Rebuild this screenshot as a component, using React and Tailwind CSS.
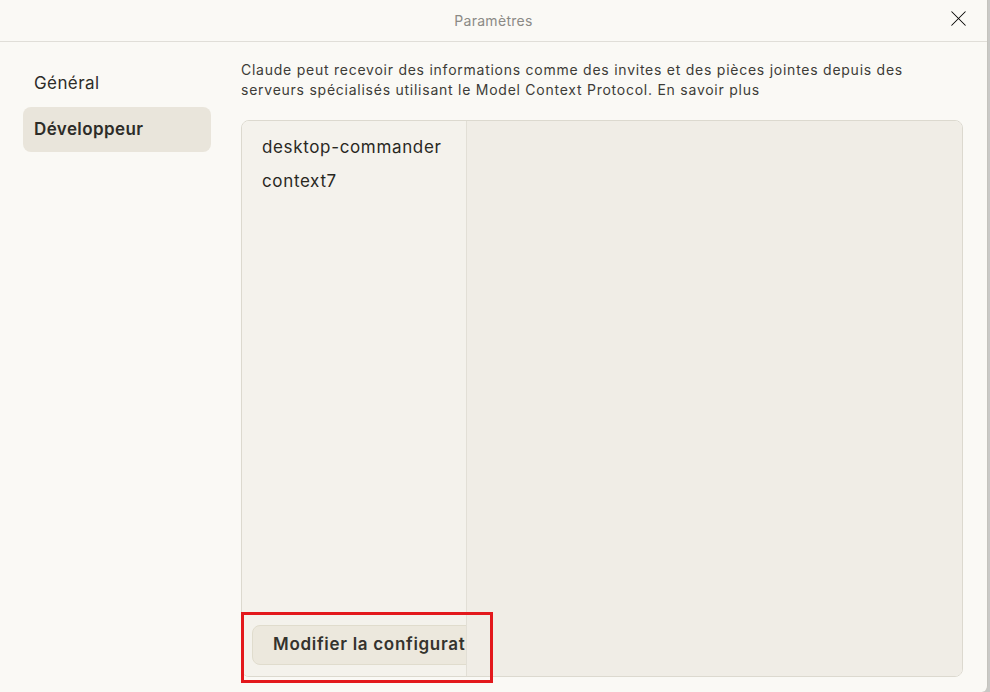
import { X } from 'lucide-react';

const SERVERS = ['desktop-commander', 'context7'];

export default function App() {
  return (
    <div className="w-[990px] h-[692px] bg-[#c9c9c6] flex" style={{ fontFamily: 'Inter, "Noto Sans", sans-serif' }}>
      <div className="relative w-[988px] h-full bg-[#faf9f5] border-r border-[#c4c3bd] rounded-br-[6px] flex flex-col overflow-hidden">
        {/* title bar */}
        <div className="h-[42px] flex-shrink-0 border-b border-[#e0ded8] flex items-center justify-center relative">
          <span className="text-[14px] tracking-[0.3px] text-[#8b8a86]">Paramètres</span>
          <button className="absolute left-[945px] top-[5px] text-black">
            <X className="w-[27px] h-[27px]" strokeWidth={0.9} />
          </button>
        </div>

        <div className="flex flex-1 min-h-0">
          {/* sidebar */}
          <div className="w-[218px] flex-shrink-0 pl-[23px] pr-[7px] pt-[20px] flex flex-col gap-[1px]">
            <div className="h-[44px] px-[11px] flex items-center text-[17px] tracking-[0.4px] text-[#2d2c28]">Général</div>
            <div className="h-[45px] px-[11px] flex items-center rounded-[8px] bg-[#e9e5db] text-[17px] tracking-[0.4px] font-semibold text-[#2d2c28]">
              Développeur
            </div>
          </div>

          {/* content */}
          <div className="flex-1 pl-[23px] pr-[24px] pt-[18px] pb-[15px] flex flex-col">
            <p className="text-[14px] leading-[20px] text-[#3d3c37] tracking-[0.75px]">
              Claude peut recevoir des informations comme des invites et des pièces jointes depuis des serveurs spécialisés utilisant le Model Context Protocol. En savoir plus
            </p>

            <div className="mt-[20px] flex-1 flex rounded-[8px] border border-[#dcd9cf] overflow-hidden">
              <div className="w-[225px] flex-shrink-0 bg-[#f4f2ec] border-r border-[#e2dfd6] flex flex-col overflow-hidden">
                <div className="pt-[14px] px-[20px] flex flex-col gap-[10px]">
                  {SERVERS.map(s => (
                    <div key={s} className="text-[17px] leading-[24px] tracking-[0.65px] text-[#29281f] whitespace-nowrap">{s}</div>
                  ))}
                </div>
                <div className="mt-auto pl-[10px] pb-[11px]">
                  <div className="h-[40px] w-[260px] rounded-[8px] bg-[#ece8dd] border border-[#e0dccd] flex items-center pl-[20px] text-[17px] tracking-[0.7px] font-semibold text-[#34332e] whitespace-nowrap">
                    Modifier la configuration
                  </div>
                </div>
              </div>
              <div className="flex-1 bg-[#f0ede6]" />
            </div>
          </div>
        </div>

        {/* red annotation box */}
        <div className="absolute left-[241px] top-[612px] w-[252px] h-[71px] border-[3px] border-[#e3181c] pointer-events-none" />
      </div>
    </div>
  );
}
